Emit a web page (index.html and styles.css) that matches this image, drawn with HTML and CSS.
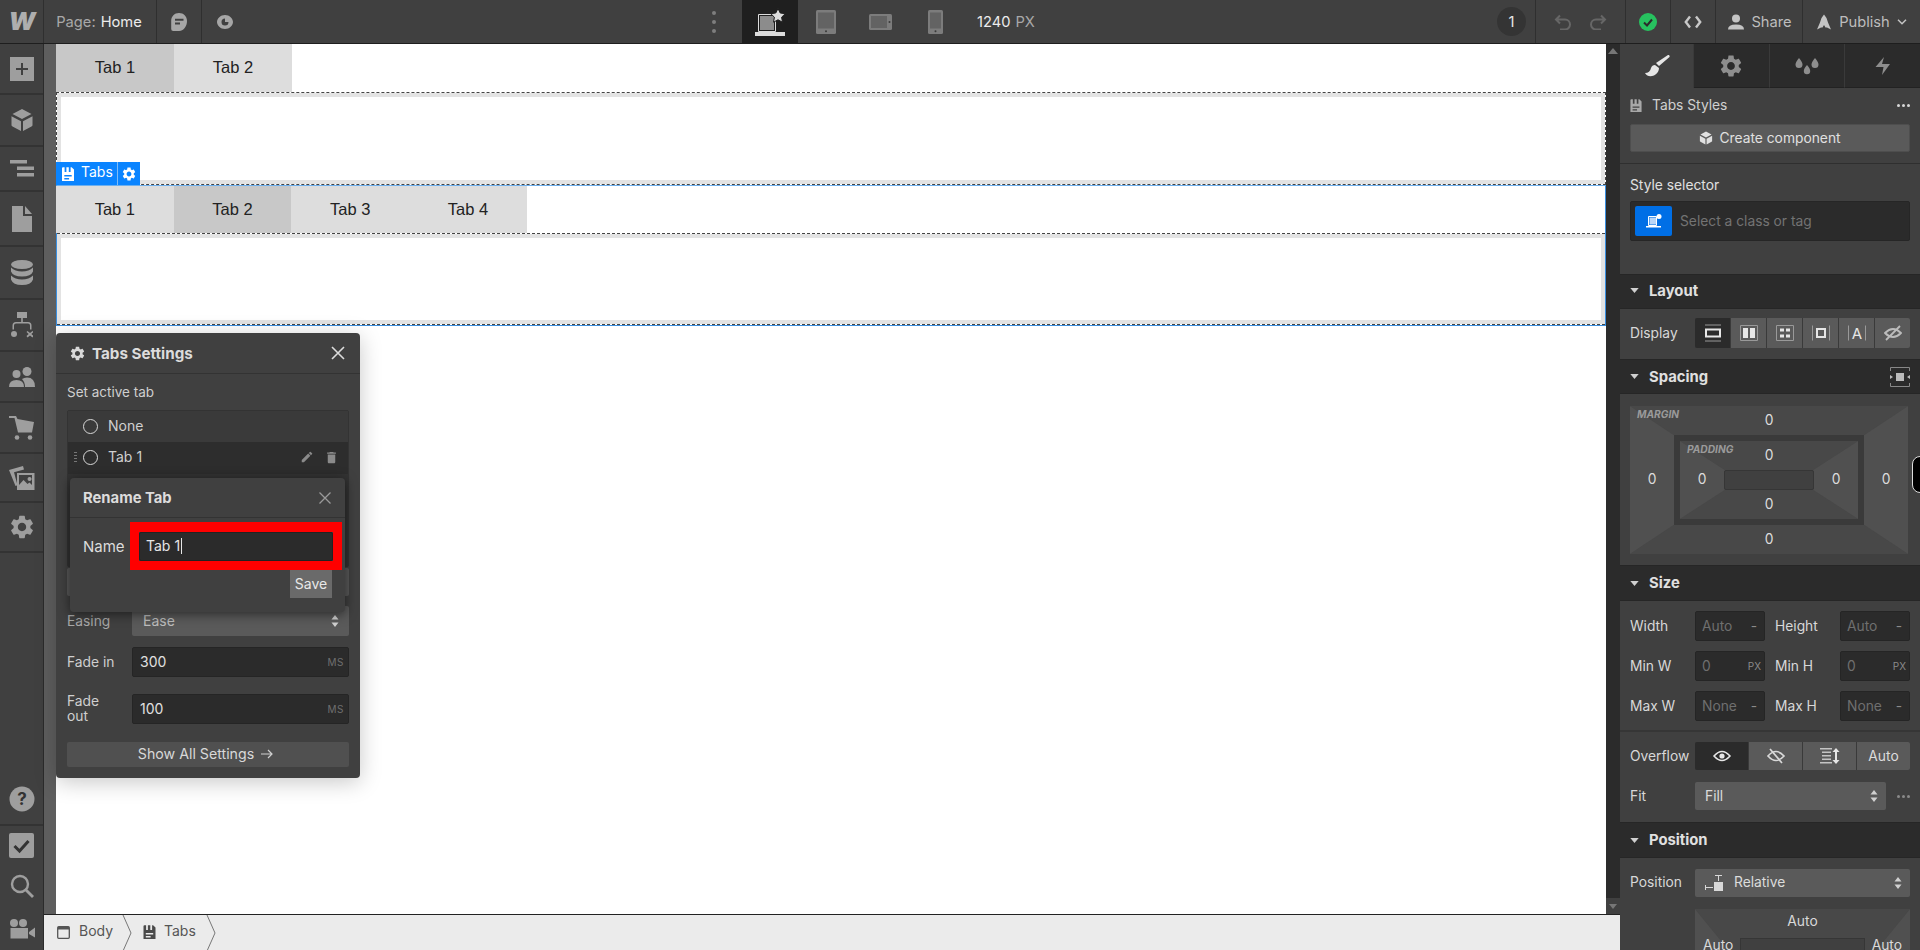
FILE: index.html
```html
<!DOCTYPE html>
<html lang="en">
<head>
<meta charset="utf-8">
<title>Webflow Designer</title>
<link rel="stylesheet" href="styles.css">
</head>
<body>
<svg class="defs" aria-hidden="true">
  <symbol id="gear" viewBox="0 0 24 24"><path d="M19.14 12.94c.04-.3.06-.61.06-.94 0-.32-.02-.64-.07-.94l2.03-1.58c.18-.14.23-.41.12-.61l-1.92-3.32c-.12-.22-.37-.29-.59-.22l-2.39.96c-.5-.38-1.03-.7-1.62-.94l-.36-2.54c-.04-.24-.24-.41-.48-.41h-3.84c-.24 0-.43.17-.47.41l-.36 2.54c-.59.24-1.13.57-1.62.94l-2.39-.96c-.22-.08-.47 0-.59.22L2.74 8.87c-.12.21-.08.47.12.61l2.03 1.58c-.05.3-.09.63-.09.94s.02.64.07.94l-2.03 1.58c-.18.14-.23.41-.12.61l1.92 3.32c.12.22.37.29.59.22l2.39-.96c.5.38 1.03.7 1.62.94l.36 2.54c.05.24.24.41.48.41h3.84c.24 0 .44-.17.47-.41l.36-2.54c.59-.24 1.13-.56 1.62-.94l2.39.96c.22.08.47 0 .59-.22l1.92-3.32c.12-.22.07-.47-.12-.61l-2.01-1.58zM12 15.6c-1.98 0-3.6-1.62-3.6-3.6s1.62-3.6 3.6-3.6 3.6 1.62 3.6 3.6-1.62 3.6-3.6 3.6z"/></symbol>
  <symbol id="tabsicon" viewBox="0 0 12 14"><path fill-rule="evenodd" d="M0 14V1.2q0-1 1-1h1.6V5h1.8V.2h2.4V5h1.8V.2h1l2.4 2.4V14zM2.3 8v1.4h7.4V8zm0 3v1.4h4.8V11z"/></symbol>
  <symbol id="cube" viewBox="0 0 24 24"><path d="M12 1l9.5 5L12 11 2.5 6zM1.5 8.2l9.5 5V23l-8.5-4.5-1-1zM22.5 8.2l-9.5 5V23l8.5-4.5 1-1z"/></symbol>
  <symbol id="updown" viewBox="0 0 8 12"><path d="M4 0l3.5 4.4h-7zM4 12L.5 7.6h7z"/></symbol>
  <symbol id="tri" viewBox="0 0 10 6"><path d="M0 0h10L5 6z"/></symbol>
</svg>

<div class="app">
  <header class="topbar">
    <div class="tb-left">
      <div class="tb-cell tb-logo"><span class="logo-w">W</span></div>
      <div class="tb-cell tb-page"><span class="muted">Page:</span><span class="strong">Home</span></div>
      <div class="tb-cell tb-comment">
        <svg width="18" height="20" viewBox="0 0 18 20"><path fill="#a6a6a6" fill-rule="evenodd" d="M9 1c4.6 0 8 3.3 8 8s-2.6 9.6-8 10H3.200q-2-.1-2-2V9C1.200 4.300 4.500 1 9 1zM5 6.800v2h8.500v-2zM5 10.400v2h5v-2z"/></svg>
      </div>
      <div class="tb-cell tb-eye">
        <svg width="18" height="16" viewBox="0 0 18 16"><path fill="#a6a6a6" fill-rule="evenodd" d="M9 1c4.500 0 8 3.500 8 7s-3.500 7-8 7-8-3.500-8-7 3.500-7 8-7zM9 4.500a3.500 3.500 0 1 0 3.500 3.500H9z"/></svg>
      </div>
    </div>
    <div class="tb-dots"><i></i><i></i><i></i></div>
    <div class="device device-on">
      <svg width="32" height="28" viewBox="0 0 32 28"><path fill="none" stroke="#dcdcdc" d="M4.500 6.500h17v17h-17z"/><path fill="#8c8c8c" d="M6 8h14v14H6z"/><path fill="#dcdcdc" d="M1 24h30v4H1z"/><path fill="#dcdcdc" stroke="#1f1f1f" d="M24 .5l2.200 4.500 5 .7-3.600 3.500.9 5-4.500-2.400-4.500 2.400.9-5-3.600-3.500 5-.7z"/></svg>
    </div>
    <div class="device">
      <svg width="20" height="24" viewBox="0 0 20 24"><rect width="20" height="24" rx="1.500" fill="#7c7c7c"/><rect x="2" y="2.500" width="16" height="16" fill="#636363"/><circle cx="10" cy="21.300" r="1" fill="#3a3a3a"/></svg>
    </div>
    <div class="device">
      <svg width="23" height="16" viewBox="0 0 23 16"><rect width="23" height="16" rx="1.500" fill="#7c7c7c"/><rect x="2" y="2" width="16" height="12" fill="#636363"/><circle cx="20.500" cy="8" r="1" fill="#3a3a3a"/></svg>
    </div>
    <div class="device">
      <svg width="15" height="24" viewBox="0 0 15 24"><rect width="15" height="24" rx="1.500" fill="#7c7c7c"/><rect x="2" y="2.500" width="11" height="16" fill="#636363"/><circle cx="7.500" cy="21.300" r="1" fill="#3a3a3a"/></svg>
    </div>
    <div class="tb-width"><span class="strong">1240</span><span class="muted">PX</span></div>
    <div class="tb-fill"></div>
    <div class="tb-cell tb-count"><span class="count">1</span></div>
    <div class="tb-cell tb-undo">
      <svg width="18" height="16" viewBox="0 0 18 16"><path fill="none" stroke="#666" stroke-width="2" d="M2 5.500h9a5 5 0 0 1 0 10H6M6 1.500L2 5.500l4 4"/></svg>
      <svg width="18" height="16" viewBox="0 0 18 16"><path fill="none" stroke="#666" stroke-width="2" d="M16 5.500H7a5 5 0 0 0 0 10h5M12 1.500l4 4-4 4"/></svg>
    </div>
    <div class="tb-cell tb-check">
      <svg width="18" height="18" viewBox="0 0 18 18"><circle cx="9" cy="9" r="9" fill="#27c25f"/><path fill="none" stroke="#2b2b2b" stroke-width="2" d="M5 9.500l3 3 5-6"/></svg>
    </div>
    <div class="tb-cell tb-code">
      <svg width="18" height="14" viewBox="0 0 18 14"><path fill="none" stroke="#c8c8c8" stroke-width="2.400" d="M6 1.500L1.800 7 6 12.500M12 1.500L16.200 7 12 12.500"/></svg>
    </div>
    <div class="tb-cell tb-share">
      <svg width="16" height="16" viewBox="0 0 16 16"><circle cx="8" cy="4.500" r="4" fill="#c4c4c4"/><path fill="#c4c4c4" d="M0 15.500q0-5 8-5t8 5z"/></svg>
      <span>Share</span>
    </div>
    <div class="tb-cell tb-publish">
      <svg width="16" height="16" viewBox="0 0 16 16"><path fill="#c4c4c4" d="M8 .5q3 3 4 8l3 7-4-2H9.500L8 11l-1.500 2.500H5l-4 2 3-7q1-5 4-8z"/></svg>
      <span>Publish</span>
      <svg width="10" height="6" viewBox="0 0 10 6"><path fill="none" stroke="#c4c4c4" stroke-width="1.500" d="M1 .8l4 4 4-4"/></svg>
    </div>
  </header>

  <div class="main">
    <nav class="rail">
      <div class="rail-item h51"><svg width="24" height="24" viewBox="0 0 24 24"><path fill="#9e9e9e" fill-rule="evenodd" d="M0 0h24v24H0zM11 6v5H6v2h5v5h2v-5h5v-2h-5V6z"/></svg></div>
      <div class="rail-item h52"><svg class="ri" width="24" height="24"><use href="#cube"/></svg></div>
      <div class="rail-item h45"><svg class="ri" width="24" height="18" viewBox="0 0 24 18"><path d="M0 0h17v3.500H0zM7 6.500h17V10H7zM7 13h17v3.500H7z"/></svg></div>
      <div class="rail-item h55"><svg class="ri" width="20" height="26" viewBox="0 0 20 26"><path d="M0 0h11v10h9v16H0zM13 0l7 8h-7z"/></svg></div>
      <div class="rail-item h53"><svg class="ri" width="22" height="26" viewBox="0 0 22 26"><ellipse cx="11" cy="4.500" rx="11" ry="4.500"/><path d="M0 7.500q4 4 11 4t11-4v4q-2 5-11 5t-11-5zM0 15.500q4 4 11 4t11-4v4q-2 5.500-11 5.500T0 19.500z"/></svg></div>
      <div class="rail-item h52"><svg class="ri" width="22" height="26" viewBox="0 0 22 26"><path d="M6 0h10v6H6zM10.200 6h1.600v4H17q3.500 0 3.500 3.500v4H19v-4q0-2-2-2H5q-2 0-2 2v4H1.500v-4Q1.500 10 5 10h5.200z"/><circle cx="3" cy="22" r="3"/><path d="M16.500 19l2.500 2 2.500-2 1 1-2.200 2 2.200 2-1 1.500-2.500-2-2.500 2-1-1.500 2.200-2-2.200-2z"/></svg></div>
      <div class="rail-item h51"><svg class="ri" width="26" height="20" viewBox="0 0 26 20"><circle cx="18" cy="4.500" r="4.500"/><circle cx="7.500" cy="7" r="4"/><path d="M0 20q0-7 7.500-7t7.500 7zM16 20q0-5-3-8 2-1.500 5-1.500 8 0 8 9.500z"/></svg></div>
      <div class="rail-item h51"><svg class="ri" width="26" height="24" viewBox="0 0 26 24"><path d="M0 0h7l1.500 3L25 6l-2 10.500H9L5.500 2H0z"/><circle cx="8" cy="21.500" r="2.300"/><circle cx="21" cy="21.500" r="2.300"/></svg></div>
      <div class="rail-item h49"><svg class="ri" width="26" height="24" viewBox="0 0 26 24"><path d="M0 4l14-4 1 3.500-10 2.800 3.500 13-2 .7z"/><path fill-rule="evenodd" d="M8 7h17.500v17H8zM10 9v10l4.500-5 4 4 2-1.500 2.500 2.500V9zM20.500 11a2 2 0 1 0 .1 0z"/></svg></div>
      <div class="rail-item h50"><svg class="ri" width="28" height="28"><use href="#gear"/></svg></div>
      <div class="rail-spacer"></div>
      <div class="rail-item h53 rail-help"><svg width="26" height="26" viewBox="0 0 26 26"><circle cx="13" cy="13" r="12.500" fill="#9e9e9e"/><text x="13" y="19" text-anchor="middle" class="help-q">?</text></svg></div>
      <div class="rail-item h39 plain"><svg width="25" height="25" viewBox="0 0 25 25"><rect width="25" height="25" rx="2" fill="#9e9e9e"/><path fill="none" stroke="#333" stroke-width="3" d="M5.500 13l5 5 9-10"/></svg></div>
      <div class="rail-item h42 plain"><svg width="24" height="24" viewBox="0 0 24 24"><circle cx="10" cy="10" r="8" fill="none" stroke="#9e9e9e" stroke-width="2.400"/><path stroke="#9e9e9e" stroke-width="2.800" d="M15.500 15.500L23 23"/></svg></div>
      <div class="rail-item h43 plain"><svg class="ri" width="26" height="20" viewBox="0 0 26 20"><circle cx="5" cy="4" r="4"/><circle cx="14" cy="4" r="4"/><path d="M1.500 9h17.500v10.500H1.500zM20 13l6-4.500v10L20 15z"/></svg></div>
    </nav>

    <div class="stage">
      <div class="stage-top">
        <div class="gutter"></div>
        <div class="canvas">
          <section class="tabs-a">
            <div class="tabbar">
              <div class="tab tab-on">Tab 1</div>
              <div class="tab">Tab 2</div>
            </div>
            <div class="pane pane-a"></div>
          </section>
          <section class="tabs-b">
            <div class="tabbar tabbar-b">
              <div class="tab">Tab 1</div>
              <div class="tab tab-on">Tab 2</div>
              <div class="tab">Tab 3</div>
              <div class="tab">Tab 4</div>
            </div>
            <div class="pane pane-b"></div>
          </section>

          <div class="sel-label">
            <span class="sel-name"><svg class="w-ic" width="12" height="14"><use href="#tabsicon"/></svg><span class="sel-txt">Tabs</span></span>
            <span class="sel-gear"><svg class="w-ic" width="16" height="16"><use href="#gear"/></svg></span>
          </div>

          <aside class="settings">
            <div class="set-head">
              <svg class="g-ic" width="17" height="17"><use href="#gear"/></svg>
              <span class="set-title">Tabs Settings</span>
              <svg class="x-ic" width="14" height="14" viewBox="0 0 14 14"><path stroke="#dcdcdc" stroke-width="1.600" d="M1 1l12 12M13 1L1 13"/></svg>
            </div>
            <div class="set-body">
              <div class="set-label">Set active tab</div>
              <div class="tab-list">
                <div class="tl-row"><i class="radio"></i><span>None</span></div>
                <div class="tl-row tl-hover">
                  <i class="grip"></i><i class="radio"></i><span>Tab 1</span>
                  <span class="tl-actions">
                    <svg width="14" height="14" viewBox="0 0 24 24"><path fill="#8a8a8a" d="M3 17.250V21h3.750L17.810 9.940l-3.750-3.750L3 17.250zM20.710 7.040a1 1 0 0 0 0-1.410l-2.340-2.340a1 1 0 0 0-1.410 0l-1.830 1.830 3.750 3.750 1.830-1.830z"/></svg>
                    <svg width="15" height="15" viewBox="0 0 24 24"><path fill="#8a8a8a" d="M6 19c0 1.100.9 2 2 2h8c1.100 0 2-.9 2-2V7H6v12zM19 4h-3.500l-1-1h-5l-1 1H5v2h14V4z"/></svg>
                  </span>
                </div>
              </div>
              <div class="ghost-row"></div>
              <div class="field field-ease">
                <label class="f-label">Easing</label>
                <div class="f-select"><span>Ease</span><svg class="ud" width="8" height="12"><use href="#updown"/></svg></div>
              </div>
              <div class="field field-in">
                <label class="f-label">Fade in</label>
                <div class="f-input"><span>300</span><em>MS</em></div>
              </div>
              <div class="field field-out">
                <label class="f-label">Fade<br>out</label>
                <div class="f-input"><span>100</span><em>MS</em></div>
              </div>
              <div class="show-all">Show All Settings
                <svg width="12" height="10" viewBox="0 0 12 10"><path fill="none" stroke="#d0d0d0" stroke-width="1.200" d="M0 5h11M7 1l4 4-4 4"/></svg>
              </div>
            </div>
            <div class="rename">
              <div class="rn-head">
                <span>Rename Tab</span>
                <svg width="12" height="12" viewBox="0 0 12 12"><path stroke="#9a9a9a" stroke-width="1.300" d="M.5.5l11 11M11.500.5l-11 11"/></svg>
              </div>
              <div class="rn-row">
                <label class="rn-label">Name</label>
                <div class="rn-red"><div class="rn-input">Tab 1<i class="caret"></i></div></div>
              </div>
              <div class="rn-save">Save</div>
            </div>
          </aside>
        </div>
        <div class="scrollbar">
          <svg width="10" height="6"><use href="#tri" class="sb-up"/></svg>
          <div class="sb-fill"></div>
          <div class="sb-down"><svg class="sb-ic" width="8" height="5"><use href="#tri"/></svg></div>
        </div>
      </div>
      <footer class="crumbs">
        <div class="crumb">
          <svg width="13" height="13" viewBox="0 0 13 13"><rect x=".7" y=".7" width="11.600" height="11.600" rx="1" fill="none" stroke="#555" stroke-width="1.300"/><path fill="#555" d="M1 1h11v2.500H1z"/></svg>
          <span>Body</span>
        </div>
        <svg class="chev" width="10" height="36" viewBox="0 0 10 36"><path fill="none" stroke="#777" d="M1 0l8 18-8 18"/></svg>
        <div class="crumb crumb2">
          <svg class="dk" width="13" height="14"><use href="#tabsicon"/></svg>
          <span>Tabs</span>
        </div>
        <svg class="chev" width="10" height="36" viewBox="0 0 10 36"><path fill="none" stroke="#777" d="M1 0l8 18-8 18"/></svg>
      </footer>
    </div>

    <aside class="panel">
      <div class="ptabs">
        <div class="ptab ptab-on"><svg width="26" height="22" viewBox="0 0 26 22"><path fill="#e6e6e6" d="M25 0q1 1 .5 2L15 11l-3-3 12-8zM1 18q5 0 6-5 1-3 4-3l4 3q0 5-5 7.500-6 2.500-9-2.500z"/></svg></div>
        <div class="ptab"><svg class="pi" width="26" height="26"><use href="#gear"/></svg></div>
        <div class="ptab"><svg class="pi" width="24" height="20" viewBox="0 0 24 20"><path d="M4 2q3.500 4 3.500 6.500a3.500 3.500 0 0 1-7 0Q.5 6 4 2zM20 2q3.500 4 3.500 6.500a3.500 3.500 0 0 1-7 0Q16.500 6 20 2zM12 9q3.200 3.700 3.200 6a3.200 3.200 0 0 1-6.400 0q0-2.300 3.200-6z"/></svg></div>
        <div class="ptab"><svg class="pi" width="16" height="18" viewBox="0 0 16 18"><path d="M9 0L7 7h8L7 18l1.500-8H.5z"/></svg></div>
      </div>

      <div class="block-head">
        <div class="bh-row">
          <svg class="bh-ic" width="12" height="13"><use href="#tabsicon"/></svg>
          <span>Tabs Styles</span>
          <span class="more"><i></i><i></i><i></i></span>
        </div>
        <div class="create"><svg width="14" height="14"><use href="#cube" class="c-ic"/></svg>Create component</div>
      </div>

      <div class="block-selector">
        <div class="ss-label">Style selector</div>
        <div class="ss-box">
          <span class="ss-blue"><svg width="16" height="14" viewBox="0 0 16 14"><path fill="none" stroke="#fff" d="M2.500 2.500h8v9h-8z"/><path fill="#b9d6f7" d="M3.500 3.500h6.500v7H3.500z"/><path fill="#fff" d="M0 12h15v1.500H0z"/><circle cx="13" cy="2.500" r="2.500" fill="#fff"/></svg></span>
          <span class="ss-ph">Select a class or tag</span>
        </div>
      </div>

      <div class="sec-head sec-up"><svg class="tri" width="9" height="5"><use href="#tri"/></svg>Layout</div>
      <div class="row-display">
        <span class="lbl">Display</span>
        <div class="seg seg-6">
          <span class="seg-b seg-on"><svg width="18" height="18" viewBox="0 0 18 18"><path fill="none" stroke="#e6e6e6" stroke-width="2" d="M2 5.500h14v7H2z"/><path stroke="#999" d="M1 1h16M1 17h16"/></svg></span>
          <span class="seg-b"><svg width="18" height="16" viewBox="0 0 18 16"><path fill="none" stroke="#999" d="M.5.500h17v15H.5z"/><path fill="#e6e6e6" d="M3 3h5v10H3zM10 3h5v10h-5z"/></svg></span>
          <span class="seg-b"><svg width="18" height="16" viewBox="0 0 18 16"><path fill="none" stroke="#999" d="M.5.500h17v15H.5z"/><path fill="#e6e6e6" d="M4 3.500h4v3H4zM10 3.500h4v3h-4zM4 9.500h4v3H4zM10 9.500h4v3h-4z"/></svg></span>
          <span class="seg-b"><svg width="18" height="16" viewBox="0 0 18 16"><path stroke="#999" d="M.5.500v15M17.500.500v15"/><path fill="none" stroke="#e6e6e6" stroke-width="2" d="M5 4h8v8H5z"/></svg></span>
          <span class="seg-b"><svg width="18" height="16" viewBox="0 0 18 16"><path stroke="#999" d="M.5.500v15M17.500.500v15"/><text x="9" y="13.500" text-anchor="middle" class="seg-a">A</text></svg></span>
          <span class="seg-b"><svg width="18" height="16" viewBox="0 0 18 16"><path fill="none" stroke="#bbb" stroke-width="1.800" d="M1 8q8-8 16 0-8 8-16 0zM2 15L16 1"/></svg></span>
        </div>
      </div>

      <div class="sec-head"><svg class="tri" width="9" height="5"><use href="#tri"/></svg>Spacing
        <svg class="sp-mini" width="20" height="20" viewBox="0 0 20 20"><path fill="none" stroke="#888" d="M.5 4V.5h19V4M.5 16v3.500h19V16"/><path fill="#bbb" d="M6 6h8v8H6z"/><path fill="#bbb" d="M0 8l3 2-3 2zM20 8l-3 2 3 2z"/></svg>
      </div>
      <div class="block-spacing">
        <div class="sp-box sp-margin">
          <svg class="sp-bg" viewBox="0 0 100 100" preserveAspectRatio="none"><path fill="#505050" d="M0 0L16 20V80L0 100zM100 0L84 20V80L100 100z"/><path fill="#484848" d="M0 0H100L84 20H16zM0 100H100L84 80H16z"/></svg>
          <span class="sp-tag">MARGIN</span>
          <span class="sp-v top">0</span>
          <span class="sp-v left">0</span>
          <div class="sp-box sp-padding mid">
            <svg class="sp-bg" viewBox="0 0 100 100" preserveAspectRatio="none"><path fill="#505050" d="M0 0L25 37V63L0 100zM100 0L75 37V63L100 100z"/><path fill="#484848" d="M0 0H100L75 37H25zM0 100H100L75 63H25z"/></svg>
            <span class="sp-tag">PADDING</span>
            <span class="sp-v top">0</span>
            <span class="sp-v left">0</span>
            <div class="sp-center mid"></div>
            <span class="sp-v right">0</span>
            <span class="sp-v bottom">0</span>
          </div>
          <span class="sp-v right">0</span>
          <span class="sp-v bottom">0</span>
        </div>
      </div>

      <div class="sec-head sec-tall"><svg class="tri" width="9" height="5"><use href="#tri"/></svg>Size</div>
      <div class="block-size">
        <span class="lbl">Width</span><div class="inp"><span>Auto</span><em>-</em></div>
        <span class="lbl lbl-r">Height</span><div class="inp"><span>Auto</span><em>-</em></div>
        <span class="lbl">Min W</span><div class="inp"><span>0</span><em class="px">PX</em></div>
        <span class="lbl lbl-r">Min H</span><div class="inp"><span>0</span><em class="px">PX</em></div>
        <span class="lbl">Max W</span><div class="inp"><span>None</span><em>-</em></div>
        <span class="lbl lbl-r">Max H</span><div class="inp"><span>None</span><em>-</em></div>
      </div>

      <div class="block-overflow">
        <div class="row-over">
          <span class="lbl">Overflow</span>
          <div class="seg seg-4">
            <span class="seg-b seg-on"><svg width="18" height="14" viewBox="0 0 18 14"><path fill="none" stroke="#e6e6e6" stroke-width="1.600" d="M1 7q8-9 16 0-8 9-16 0z"/><circle cx="9" cy="7" r="2.600" fill="#e6e6e6"/></svg></span>
            <span class="seg-b"><svg width="18" height="16" viewBox="0 0 18 16"><path fill="none" stroke="#d8d8d8" stroke-width="1.700" d="M1 8q8-9 16 0-8 9-16 0zM3 1l12 14"/></svg></span>
            <span class="seg-b"><svg width="20" height="16" viewBox="0 0 20 16"><path fill="#c4c4c4" d="M0 0h12v1.500H0zM2 3.500h9V5H2zM2 7h9v1.500H2zM2 10.500h9V12H2zM0 14h12v1.500H0z"/><path fill="#e6e6e6" d="M16 0l3.500 4h-2.500v8h2.500L16 16l-3.500-4H15V4h-2.500z"/></svg></span>
            <span class="seg-b seg-t">Auto</span>
          </div>
        </div>
        <div class="row-fit">
          <span class="lbl">Fit</span>
          <div class="sel sel-fit"><span>Fill</span><svg class="ud" width="8" height="12"><use href="#updown"/></svg></div>
          <span class="fit-more"><i></i><i></i><i></i></span>
        </div>
      </div>

      <div class="sec-head sec-tall"><svg class="tri" width="9" height="5"><use href="#tri"/></svg>Position</div>
      <div class="block-position">
        <div class="row-pos">
          <span class="lbl">Position</span>
          <div class="sel">
            <svg class="pos-ic" width="18" height="16" viewBox="0 0 18 16"><path fill="#d8d8d8" d="M9 7h9v9H9zM10 0h7v1h-3v5h-1V1h-3zM0 10h1v2h7v1H1v2H0z"/></svg>
            <span class="sel-txt">Relative</span><svg class="ud ud-r" width="8" height="12"><use href="#updown"/></svg>
          </div>
        </div>
        <div class="pos-box">
          <svg class="sp-bg" viewBox="0 0 100 100" preserveAspectRatio="none"><path fill="#505050" d="M0 0L16 70V100H0zM100 0L84 70V100H100z"/><path fill="#484848" d="M0 0H100L84 70H16z"/></svg>
          <span class="pb-top">Auto</span>
          <div class="pb-row"><span>Auto</span><div class="pb-inner"></div><span>Auto</span></div>
        </div>
      </div>
    </aside>
  </div>
  <div class="edge-handle"></div>
</div>
</body>
</html>
```
FILE: styles.css
```css
* { box-sizing: border-box; }
html, body { margin: 0; height: 100%; overflow: hidden; }
body { font: 13.8px/16px Inter, "Noto Sans", sans-serif; color: #d9d9d9; background: #404040; }
.defs { position: absolute; width: 0; height: 0; }
i, em { font-style: normal; }

.app { width: 1920px; height: 950px; display: flex; flex-direction: column; position: relative; }

/* top bar */
.topbar { height: 44px; flex: none; display: flex; align-items: stretch; background: #404040; border-bottom: 1px solid #1e1e1e; font-size: 14.700px; }
.tb-left { width: 686px; display: flex; }
.tb-cell { display: flex; align-items: center; justify-content: center; border-right: 1px solid #2f2f2f; }
.tb-logo { width: 44px; }
.logo-w { font: italic 900 25px/1 Inter, sans-serif; color: #aeaeae; letter-spacing: -1px; }
.tb-page { width: 113px; gap: 5px; padding-right: 2px; }
.muted { color: #a8a8a8; }
.strong { color: #ececec; }
.tb-comment { width: 45px; }
.tb-eye { width: 45px; border-right: 0; }
.tb-dots { width: 56px; display: flex; flex-direction: column; align-items: center; justify-content: center; gap: 5px; }
.tb-dots i { width: 4px; height: 4px; border-radius: 50%; background: #7e7e7e; }
.device { width: 55px; display: flex; align-items: center; justify-content: center; }
.device-on { width: 56px; background: #1f1f1f; }
.tb-width { margin-left: 14px; display: flex; align-items: center; gap: 5px; }
.tb-fill { flex: 1; }
.tb-count { width: 39px; justify-content: flex-start; }
.count { width: 29px; height: 29px; border-radius: 50%; background: #343434; color: #e6e6e6; display: flex; align-items: center; justify-content: center; }
.tb-undo { width: 90px; gap: 17px; }
.tb-check { width: 45px; }
.tb-code { width: 45px; }
.tb-share { width: 87px; gap: 7px; color: #bdbdbd; padding-left: 2px; }
.tb-publish { width: 117px; gap: 7px; color: #bdbdbd; border-right: 0; }

/* main */
.main { flex: 1; display: flex; min-height: 0; }
.rail { width: 44px; flex: none; display: flex; flex-direction: column; background: #404040; border-right: 1px solid #2b2b2b; }
.rail-item { display: flex; align-items: center; justify-content: center; border-bottom: 2px solid #333; flex: none; }
.rail-item.plain { border-bottom: 0; }
.rail-help { border-bottom: 2px solid #333; }
.rail-spacer { flex: 1; }
.h39 { height: 39px; } .h42 { height: 42px; } .h43 { height: 43px; }
.h45 { height: 45px; } .h49 { height: 49px; } .h50 { height: 50px; }
.h51 { height: 51px; } .h52 { height: 52px; } .h53 { height: 53px; } .h55 { height: 55px; }
.ri { fill: #9e9e9e; }
.help-q { font: 700 17px Inter, sans-serif; fill: #333; }

.stage { flex: 1; min-width: 0; display: flex; flex-direction: column; }
.stage-top { flex: 1; min-height: 0; display: flex; }
.gutter { width: 12px; flex: none; background: #5e5e5e; }
.canvas { flex: 1; min-width: 0; background: #fff; position: relative; }
.scrollbar { width: 14px; flex: none; background: #2b2b2b; display: flex; flex-direction: column; align-items: center; }
.scrollbar > svg { margin-top: 4px; fill: #777; transform: rotate(180deg); }
.sb-fill { flex: 1; }
.sb-down { width: 14px; height: 16px; background: #404040; display: flex; align-items: center; justify-content: center; }
.sb-ic { fill: #777; }

.tabbar { display: flex; height: 48px; }
.tab { width: 118px; background: #ddd; color: #222; font: 16.500px/47px "Liberation Sans", Arial, sans-serif; text-align: center; }
.tab-on { background: #c8c8c8; }
.pane { border: 1px dashed #444; background: #fff; box-shadow: inset 0 0 0 4px #e3e3e3; }
.pane-a { height: 93px; }
.tabs-b { border: 1px solid #3a8fe0; border-top-color: #6db0ef; height: 141px; }
.tabbar-b { height: 47px; margin-left: -1px; }
.tabbar-b .tab { width: 117.700px; line-height: 46px; }
.pane-b { height: 92px; border-left: 0; border-right: 0; }

.sel-label { position: absolute; left: 0; top: 118px; height: 23px; display: flex; background: #0a84ff; color: #fff; }
.sel-name { width: 62px; display: flex; align-items: center; gap: 7px; padding-left: 6px; border-right: 1px solid #7fbcf7; font-size: 14px; }
.sel-name .sel-txt { margin-top: -3px; }
.sel-gear { width: 22px; display: flex; align-items: center; justify-content: center; }
.w-ic { fill: #fff; }

/* settings */
.settings { position: absolute; left: 0; top: 289px; width: 304px; height: 445px; background: #404040; border-radius: 4px; box-shadow: 0 4px 22px rgba(0,0,0,.22); font-size: 14px; }
.set-head { height: 41px; display: flex; align-items: center; padding: 0 15px 0 13px; border-bottom: 1px solid #333; gap: 6px; }
.g-ic { fill: #d8d8d8; }
.set-title { font-weight: 700; color: #dcdcdc; flex: 1; font-size: 15.200px; padding-top: 1px; }
.set-body { padding: 0 11px; }
.set-label { height: 36px; display: flex; align-items: flex-end; padding-bottom: 10px; color: #cfcfcf; font-size: 13.500px; }
.tab-list { height: 157px; background: #333; border: 1px solid #333; border-radius: 2px; }
.tl-row { height: 31px; display: flex; align-items: center; padding: 0 0 1px 15px; gap: 10px; background: #3a3a3a; color: #d0d0d0; position: relative; }
.tl-hover { height: 32px; background: #2d2d2d; padding-bottom: 2px; }
.radio { width: 15px; height: 15px; border: 1.500px solid #d8d8d8; border-radius: 50%; }
.grip { position: absolute; left: 6px; width: 3px; height: 11px; background: repeating-linear-gradient(#777 0 1px, transparent 1px 3px); }
.tl-actions { margin-left: auto; display: flex; gap: 10px; padding-right: 9px; align-items: center; }
.ghost-row { height: 28px; margin-top: 1px; background: #5a5a5a; border-radius: 2px; }
.field { display: flex; align-items: center; }
.field-ease { margin-top: 10px; height: 30px; }
.field-in { margin-top: 11px; height: 30px; }
.field-out { margin-top: 17px; height: 30px; }
.f-label { width: 65px; flex: none; color: #cfcfcf; font-size: 13.800px; line-height: 15px; }
.field-ease .f-label { color: #a8a8a8; }
.f-select { flex: 1; height: 30px; background: #5a5a5a; border-radius: 2px; padding: 0 10px 0 11px; display: flex; align-items: center; justify-content: space-between; color: #bdbdbd; }
.ud { fill: #d0d0d0; }
.f-input { flex: 1; height: 30px; background: #2b2b2b; border: 1px solid #252525; border-radius: 2px; padding: 0 4px 0 7px; display: flex; align-items: center; justify-content: space-between; color: #e0e0e0; }
.f-input em { color: #6f6f6f; font-size: 10px; letter-spacing: .5px; }
.show-all { margin-top: 18px; height: 25px; background: #505050; border-radius: 2px; display: flex; align-items: center; justify-content: center; gap: 7px; color: #d8d8d8; padding: 0 5px 1px 0; font-size: 14.200px; }

/* rename */
.rename { position: absolute; left: 14px; top: 145px; width: 275px; height: 134px; background: #404040; border-radius: 4px; box-shadow: 0 2px 12px rgba(0,0,0,.55); }
.rn-head { height: 40px; display: flex; align-items: center; justify-content: space-between; padding: 0 14px 0 13px; border-bottom: 1px solid #333; font-weight: 700; color: #dcdcdc; font-size: 14.800px; }
.rn-row { display: flex; align-items: center; margin-top: 4px; padding-left: 13px; }
.rn-label { width: 47px; color: #dcdcdc; font-size: 15px; padding-top: 1px; }
.rn-red { width: 212px; height: 48px; border: solid #f00; border-width: 10px 9px 9px; }
.rn-input { height: 29px; background: #2b2b2b; border: 1px solid #222; border-radius: 2px; padding-left: 6px; line-height: 26px; color: #e6e6e6; }
.caret { display: inline-block; width: 1px; height: 16px; background: #e6e6e6; vertical-align: -3px; margin-left: 1px; }
.rn-save { width: 42px; height: 28px; margin-left: 220px; background: #6a6a6a; color: #e8e8e8; text-align: center; line-height: 28px; }

/* crumbs */
.crumbs { height: 36px; flex: none; display: flex; align-items: center; background: #ebebeb; border-top: 1px solid #222; color: #555; padding-left: 13px; font-size: 14px; }
.crumb { display: flex; align-items: center; gap: 9px; width: 65px; padding-bottom: 1px; }
.crumb span { margin-top: -2px; }
.crumb2 { width: 63px; margin-left: 11px; gap: 8px; }
.chev { flex: none; }
.dk { fill: #4a4a4a; }

/* panel */
.panel { width: 300px; flex: none; background: #404040; overflow: hidden; }
.ptabs { display: flex; height: 44px; background: #2b2b2b; }
.ptab { flex: 1; display: flex; align-items: center; justify-content: center; border-right: 1px solid #3a3a3a; border-bottom: 1px solid #222; }
.ptab:last-child { border-right: 0; }
.ptab-on { background: #404040; border-bottom: 0; flex: none; width: 74px; }
.pi { fill: #8e8e8e; }
.block-head { height: 76px; padding: 0 10px; border-bottom: 1px solid #2f2f2f; }
.bh-row { height: 36px; display: flex; align-items: center; gap: 10px; color: #d0d0d0; padding-bottom: 2px; }
.bh-ic { fill: #a8a8a8; }
.more, .fit-more { margin-left: auto; display: flex; gap: 2px; }
.more i, .fit-more i { width: 3px; height: 3px; border-radius: 50%; background: #d8d8d8; }
.fit-more { margin-left: 11px; }
.fit-more i { background: #8a8a8a; }
.create { height: 28px; background: #5a5a5a; border: 1px solid #4e4e4e; border-radius: 2px; display: flex; align-items: center; justify-content: center; gap: 6px; color: #e0e0e0; fill: #e0e0e0; }
.block-selector { height: 110px; padding: 0 10px; }
.ss-label { height: 37px; display: flex; align-items: flex-end; padding-bottom: 8px; color: #e0e0e0; }
.ss-box { height: 40px; background: #2b2b2b; border: 1px solid #262626; border-radius: 2px; display: flex; align-items: center; padding-left: 4px; gap: 8px; }
.ss-blue { width: 37px; height: 30px; background: #006fe6; border-radius: 2px; display: flex; align-items: center; justify-content: center; }
.ss-ph { color: #737373; }

.sec-head { display: flex; align-items: center; height: 35px; background: #2b2b2b; border-top: 1px solid #262626; border-bottom: 1px solid #262626; padding-left: 10px; font-weight: 700; font-size: 14.800px; color: #e0e0e0; }
.sec-tall { height: 36px; }
.sec-up { padding-bottom: 2px; }
.tri { fill: #d0d0d0; margin-right: 10px; }
.sp-mini { margin-left: auto; margin-right: 10px; }
.lbl { color: #d8d8d8; }
.row-display { height: 50px; padding: 9px 10px 0; display: flex; }
.row-display .lbl { width: 65px; line-height: 30px; }
.seg { display: flex; height: 30px; border-radius: 2px; overflow: hidden; flex: 1; gap: 1px; background: #3a3a3a; }
.seg-b { flex: 1; background: #5a5a5a; display: flex; align-items: center; justify-content: center; color: #dcdcdc; }
.seg-on { background: #2b2b2b; }
.seg-a { font: 15px Inter, sans-serif; fill: #e6e6e6; }
.block-spacing { height: 171px; padding: 12px 10px 0; }
.sp-box { position: relative; display: grid; }
.sp-bg { position: absolute; inset: 0; width: 100%; height: 100%; }
.sp-margin { width: 278px; height: 148px; grid-template: 29px 90px 29px / 44px 190px 44px; background: #4a4a4a; }
.sp-padding { grid-template: 29px 20px 29px / 44px 90px 44px; background: #4a4a4a; outline: 6px solid #3a3a3a; width: 178px; height: 78px; margin: 6px; }
.sp-margin > .mid, .sp-padding > .mid { grid-area: 2 / 2; }
.sp-v { position: relative; display: flex; align-items: center; justify-content: center; color: #dcdcdc; padding-bottom: 2px; }
.sp-v.top { grid-area: 1 / 2; }
.sp-v.left { grid-area: 2 / 1; }
.sp-v.right { grid-area: 2 / 3; }
.sp-v.bottom { grid-area: 3 / 2; }
.sp-tag { position: absolute; left: 7px; top: 2px; z-index: 1; font: italic 700 10.200px/12px Inter, sans-serif; color: #9a9a9a; }
.sp-center { position: relative; background: #404040; border: 1px solid #363636; border-radius: 2px; }
.edge-handle { position: absolute; right: -8px; top: 456px; width: 16px; height: 37px; background: #000; border: 1px solid #ddd; border-radius: 8px; }

.block-size { height: 131px; padding: 10px 10px 0; display: grid; grid-template-columns: 65px 70px 75px 70px; grid-auto-rows: 30px; row-gap: 10px; align-items: center; border-bottom: 2px solid #363636; }
.lbl-r { padding-left: 10px; }
.inp { height: 30px; background: #2b2b2b; border: 1px solid #252525; border-radius: 2px; display: flex; align-items: center; justify-content: space-between; padding: 0 7px 0 6px; color: #6f6f6f; }
.inp em { color: #8a8a8a; }
.inp .px { font-size: 10px; margin-right: -4px; }
.block-overflow { height: 90px; padding: 10px 10px 0; }
.row-over { display: flex; align-items: center; height: 28px; }
.row-over .lbl, .row-fit .lbl { width: 65px; flex: none; }
.row-over .seg { height: 28px; }
.row-fit { display: flex; align-items: center; height: 28px; margin-top: 12px; }
.sel { flex: 1; height: 28px; background: #5a5a5a; border-radius: 2px; display: flex; align-items: center; padding: 0 8px 0 10px; color: #dcdcdc; }
.sel .ud { margin-left: auto; }
.sel .sel-txt { margin-top: -2px; }
.pos-ic { margin-right: 11px; }
.block-position { padding: 11px 10px 0; }
.row-pos { display: flex; align-items: center; height: 28px; }
.row-pos .lbl { width: 65px; flex: none; margin-top: -2px; }
.pos-box { position: relative; margin: 12px 0 0 65px; height: 60px; background: #4a4a4a; text-align: center; }
.pb-top { position: relative; display: block; padding-top: 4px; line-height: 16px; }
.pb-row { position: relative; display: flex; align-items: flex-start; justify-content: space-between; padding: 8px 8px 0; line-height: 16px; }
.pb-inner { width: 125px; height: 30px; margin-top: 1px; background: #404040; border: 1px solid #363636; }
```
